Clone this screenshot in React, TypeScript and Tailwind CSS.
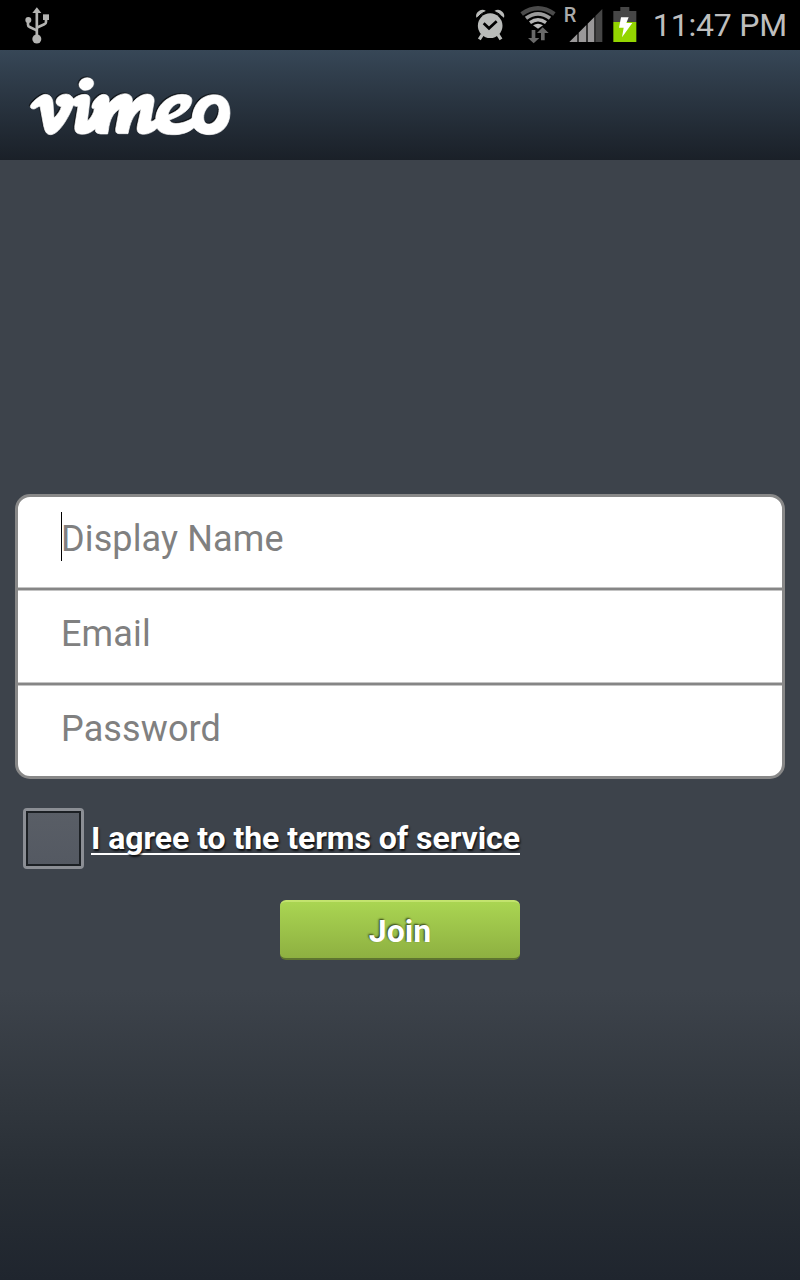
function UsbIcon() {
  return (
    <svg className="h-[50px] w-[80px]" viewBox="0 0 240 150" fill="none" stroke="#b4b4b2" strokeWidth="8">
      <path d="M110.500 34V112" />
      <path d="M84 62V74Q84 79 89 81L110 91M138 54V66Q138 71 133 73L110 83" />
      <path d="M110.500 22L124 39H97Z" fill="#b4b4b2" stroke="none" />
      <circle cx="85" cy="60" r="9" fill="#b4b4b2" stroke="none" />
      <path d="M129 43H147V60H129Z" fill="#b4b4b2" stroke="none" />
      <circle cx="110.500" cy="117" r="13.500" fill="#b4b4b2" stroke="none" />
    </svg>
  );
}

function AlarmIcon() {
  return (
    <svg className="h-[50px] w-[30px]" viewBox="45 0 90 150">
      <circle cx="90.500" cy="77" r="37" fill="#b9bbb9" />
      <path d="M49 53Q46 42 54 35Q65 25 78 33Z" fill="#b9bbb9" />
      <path d="M132 53Q135 42 127 35Q116 25 103 33Z" fill="#b9bbb9" />
      <path d="M50 58Q62 37 82 34M131 58Q119 37 99 34" stroke="#000" strokeWidth="3" fill="none" />
      <path d="M67 104L58 118M114 104L123 118" stroke="#b9bbb9" strokeWidth="10" />
      <path d="M71 70L87 85L110 64" fill="none" stroke="#000" strokeWidth="8" />
    </svg>
  );
}

function WifiIcon() {
  return (
    <svg className="h-[50px] w-[36px]" viewBox="178 0 108 150" fill="none">
      <path d="M183 42Q232 8 281 42" stroke="#4a4a4a" strokeWidth="13" />
      <path d="M196 55Q232 28 268 55" stroke="#9b9b9b" strokeWidth="11" />
      <path d="M208 68Q232 50 256 68" stroke="#b4b4b4" strokeWidth="10" />
      <path d="M217 76Q232 66 247 76L232 86Z" fill="#bcbcbc" />
      <path d="M213 90H224V114H236L219 130L202 114H213ZM241 121H252V99H264L246 82L229 99H241Z" fill="#696969" />
    </svg>
  );
}

function SignalIcon() {
  return (
    <div className="relative h-[50px] w-[40px]">
      <svg className="h-[50px] w-[40px]" viewBox="308 0 120 150">
        <path d="M327 126L351 102V126ZM355 126V98L378 75V126ZM382 126V71L402 51V126Z" fill="#9a9899" />
        <path d="M405 126V48L426 27V126Z" fill="#464646" />
      </svg>
      <span className="absolute left-px top-[5px] text-[20px] font-medium leading-[20px] text-[#aaa]">R</span>
    </div>
  );
}

function BatteryIcon() {
  return (
    <svg className="h-[50px] w-[24px]" viewBox="458 0 72 150">
      <path d="M480 21H507V33H528V66H459V33H480Z" fill="#464646" />
      <path d="M459 66H528V126H459Z" fill="#93d500" />
      <path d="M482 52H505L498 69H516L485 112L490 83H476Z" fill="#fff" />
    </svg>
  );
}

function VimeoLogo() {
  return (
    <svg
      className="h-[84px] w-[220px] [filter:drop-shadow(-0.500px_-1px_0.700px_rgb(0_0_0/0.6))]"
      viewBox="0 0 660 252"
      fill="#fff"
      stroke="#fff"
      strokeLinejoin="round"
      role="img"
      aria-label="vimeo"
    >
      <ellipse cx="199" cy="54" rx="23" ry="19" transform="rotate(-18 199 54)" />
      <path strokeWidth="2" d="M31 121C33 111 59 87 75 85C92 85 98 98 99 111L102 156C113 145 121 134 124 122C112 120 107 113 108 105C110 93 124 84 138 84C152 84 157 95 161 98C169 91 181 85 195 85C210 86 211 96 209 108L202 165C209 160 217 148 221 137L223 127C218 130 214 126 216 118C219 104 237 85 251 85C267 86 269 97 267 112C281 94 300 83 316 83C334 84 340 97 336 112C348 96 366 84 382 84C402 85 405 101 401 114L392 165C398 167 402 164 407 158C408 119 445 86 486 85C508 85 519 94 515 109C509 136 474 153 448 162C455 181 496 171 516 157C519 115 545 86 583 86C615 86 630 108 630 142C629 181 603 206 569 206C547 206 531 198 522 185C505 201 480 207 456 206C434 206 420 200 411 187C398 200 379 207 364 204C350 201 349 190 353 174L363 130C344 141 333 162 326 194L324 203L297 203C285 202 286 193 288 182L298 130C280 140 269 160 265 194L263 204L242 204C230 202 224 199 226 188C210 203 195 206 180 204C163 202 163 188 165 175L174 121C168 122 165 121 160 118C147 154 116 206 92 206C77 206 74 192 71 180L60 121C55 120 47 129 42 129C34 129 30 125 31 121ZM444 147C465 139 485 127 482 114C476 105 448 123 444 147ZM551 154C551 171 560 177 573 173C588 167 597 149 597 130C596 115 586 110 575 115C561 122 551 139 551 154Z" fillRule="evenodd" />
    </svg>
  );
}

function Field({ label, focused = false, className }: { label: string; focused?: boolean; className: string }) {
  return (
    <div className={`flex shrink-0 items-start pl-[43px] ${className}`}>
      <span className={`h-[49px] w-px ${focused ? "bg-black" : "bg-transparent"}`} />
      <span className="-ml-px text-[36px] leading-[55px] tracking-[0.130px] text-[#808080]">{label}</span>
    </div>
  );
}

function Divider() {
  return <div className="h-1 shrink-0 border-y border-[#c4c4c4] bg-[#868686]" />;
}

export default function App() {
  return (
    <div className="flex h-[1280px] w-[800px] flex-col overflow-hidden bg-[linear-gradient(180deg,#3d434b_0px,#3d434b_990px,#31373e_1100px,#282e35_1180px,#1f252e_1280px)] font-['Roboto',sans-serif]">
      <div className="flex h-[50px] shrink-0 items-center justify-between bg-black pr-[13px]">
        <UsbIcon />
        <div className="flex items-center">
          <AlarmIcon />
          <div className="w-[15px]" />
          <WifiIcon />
          <div className="w-[7px]" />
          <SignalIcon />
          <div className="w-[10px]" />
          <BatteryIcon />
          <span className="ml-4 pt-px text-[32px] leading-[53px] tracking-[-0.200px] text-[#bebebe]">11:47 PM</span>
        </div>
      </div>
      <header className="h-[110px] shrink-0 bg-linear-to-b from-[#374757] to-[#1a2028] pl-5 pt-4">
        <VimeoLogo />
      </header>
      <main className="flex flex-1 flex-col px-[15px] pt-[334px]">
        <div className="flex h-[285px] shrink-0 flex-col overflow-hidden rounded-[15px] border-[3px] border-[#888] bg-white">
          <Field label="Display Name" focused className="h-[90px] pt-[15px]" />
          <Divider />
          <Field label="Email" className="h-[91px] pt-4" />
          <Divider />
          <Field label="Password" className="h-[90px] pt-4" />
        </div>
        <div className="mt-7 flex h-[63px] items-center pl-2">
          <div className="mb-px size-[61px] shrink-0 rounded-[4px] border-[3px] border-[#8b8e94] bg-linear-to-b from-[#595e66] to-[#545962]">
            <div className="size-full border-[2.500px] border-[#1c2024]" />
          </div>
          <span className="ml-[7px] border-b-2 border-white text-[32px] font-bold leading-[30px] tracking-[-0.060px] text-white [text-shadow:1px_2px_2px_rgb(0_0_0/0.8)]">
            I agree to the terms of service
          </span>
        </div>
        <button className="mt-[30px] h-[60px] w-60 self-center rounded-[6px] border-b-2 border-t-2 border-b-[#5e7430] border-t-[#c3e36e] bg-linear-to-b from-[#aad552] to-[#8eb041] pt-px text-[32px] font-bold leading-[56px] text-white [text-shadow:-1px_-1px_2px_rgb(0_0_0/0.7)]">
          Join
        </button>
      </main>
    </div>
  );
}
